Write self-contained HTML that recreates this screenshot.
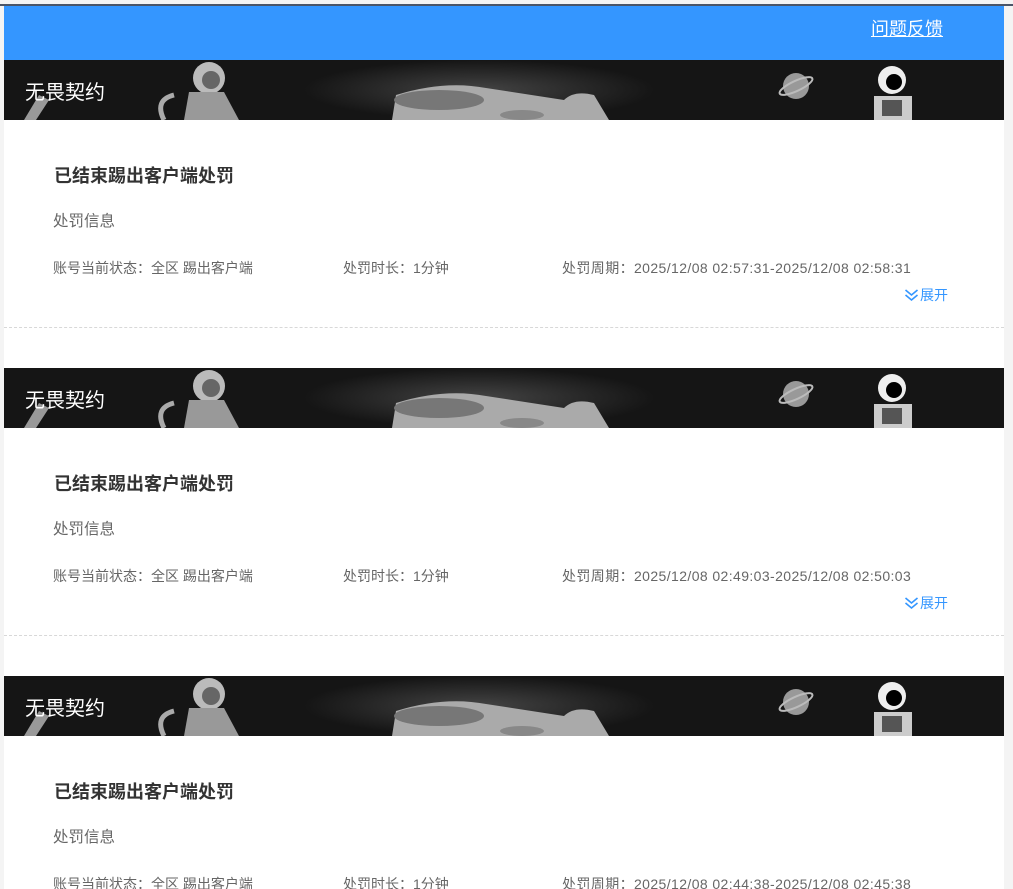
<!DOCTYPE html>
<html><head><meta charset="utf-8"><style>
*{margin:0;padding:0;box-sizing:border-box}
html,body{width:1013px;height:889px;overflow:hidden}
body{background:#f4f4f4;font-family:"Liberation Sans","Noto Sans CJK SC",sans-serif;position:relative}
.topline{position:absolute;left:0;top:4px;width:1013px;height:2px;background:#4a5568}
.wrap{position:absolute;left:4px;top:6px;width:1000px;height:883px;background:#fff;overflow:hidden}
.hdr{height:54px;background:#3496ff;position:relative}
.hdr a{position:absolute;left:867px;top:9px;color:#fff;font-size:18px;text-decoration:underline}
.card{height:308px;position:relative}
.ban{height:60px;background:#151515;position:relative;overflow:hidden}
.ban .t{position:absolute;left:21px;top:16px;color:#fff;font-size:20px}
.title{position:absolute;left:50px;top:102px;font-size:18px;font-weight:bold;color:#333}
.sub{position:absolute;left:49px;top:149px;font-size:15.5px;color:#666}
.row{position:absolute;top:198px;font-size:14px;color:#666;white-space:nowrap}
.d{letter-spacing:0.4px}
.exp{position:absolute;left:899px;top:225px;font-size:14px;color:#3496ff}
.dash{position:absolute;left:0;right:0;top:267px;border-top:1px dashed #d8d8d8}
</style></head><body>
<div class="topline"></div>
<div class="wrap">
<div class="hdr"><a>问题反馈</a></div>

<div class="card">
<div class="ban"><svg width="1000" height="60" style="position:absolute;left:0;top:0">
<defs><radialGradient id="g" cx="0.5" cy="0.5" r="0.5"><stop offset="0" stop-color="#444"/><stop offset="1" stop-color="#151515"/></radialGradient></defs>
<rect x="300" y="0" width="350" height="60" fill="url(#g)"/>
<path d="M388 60 L392 35 Q440 20 482 28 L560 40 Q570 30 590 35 L605 60Z" fill="#aaa"/>
<ellipse cx="435" cy="40" rx="45" ry="10" fill="#777"/>
<ellipse cx="518" cy="55" rx="22" ry="5" fill="#888"/>
<circle cx="205" cy="18" r="16" fill="#bbb"/><circle cx="207" cy="20" r="9" fill="#666"/>
<path d="M185 32 L220 32 L235 60 L180 60Z" fill="#999"/><path d="M160 60 Q150 40 170 35" stroke="#aaa" stroke-width="5" fill="none"/>
<path d="M20 60 L35 35 L45 40 L32 60Z" fill="#999"/>
<circle cx="792" cy="26" r="13" fill="#999"/><ellipse cx="792" cy="26" rx="18" ry="5" fill="none" stroke="#bbb" stroke-width="2" transform="rotate(-25 792 26)"/>
<circle cx="888" cy="20" r="14" fill="#eee"/><circle cx="890" cy="22" r="8" fill="#000"/>
<rect x="870" y="36" width="38" height="24" fill="#ccc"/><rect x="878" y="40" width="20" height="16" fill="#555"/>
</svg><span class="t">无畏契约</span></div>
<div class="title">已结束踢出客户端处罚</div>
<div class="sub">处罚信息</div>
<div class="row" style="left:49px">账号当前状态：全区 踢出客户端</div>
<div class="row" style="left:339px">处罚时长：1分钟</div>
<div class="row d" style="left:558px">处罚周期：2025/12/08 02:57:31-2025/12/08 02:58:31</div>
<div class="exp"><svg width="17" height="14" viewBox="0 0 16 14" style="vertical-align:-2px"><path d="M2 2 L8 7 L14 2 M2 7 L8 12 L14 7" stroke="#3496ff" stroke-width="1.6" fill="none"/></svg>展开</div>
<div class="dash"></div>
</div>

<div class="card">
<div class="ban"><svg width="1000" height="60" style="position:absolute;left:0;top:0">
<rect x="300" y="0" width="350" height="60" fill="url(#g)"/>
<path d="M388 60 L392 35 Q440 20 482 28 L560 40 Q570 30 590 35 L605 60Z" fill="#aaa"/>
<ellipse cx="435" cy="40" rx="45" ry="10" fill="#777"/>
<ellipse cx="518" cy="55" rx="22" ry="5" fill="#888"/>
<circle cx="205" cy="18" r="16" fill="#bbb"/><circle cx="207" cy="20" r="9" fill="#666"/>
<path d="M185 32 L220 32 L235 60 L180 60Z" fill="#999"/><path d="M160 60 Q150 40 170 35" stroke="#aaa" stroke-width="5" fill="none"/>
<path d="M20 60 L35 35 L45 40 L32 60Z" fill="#999"/>
<circle cx="792" cy="26" r="13" fill="#999"/><ellipse cx="792" cy="26" rx="18" ry="5" fill="none" stroke="#bbb" stroke-width="2" transform="rotate(-25 792 26)"/>
<circle cx="888" cy="20" r="14" fill="#eee"/><circle cx="890" cy="22" r="8" fill="#000"/>
<rect x="870" y="36" width="38" height="24" fill="#ccc"/><rect x="878" y="40" width="20" height="16" fill="#555"/>
</svg><span class="t">无畏契约</span></div>
<div class="title">已结束踢出客户端处罚</div>
<div class="sub">处罚信息</div>
<div class="row" style="left:49px">账号当前状态：全区 踢出客户端</div>
<div class="row" style="left:339px">处罚时长：1分钟</div>
<div class="row d" style="left:558px">处罚周期：2025/12/08 02:49:03-2025/12/08 02:50:03</div>
<div class="exp"><svg width="17" height="14" viewBox="0 0 16 14" style="vertical-align:-2px"><path d="M2 2 L8 7 L14 2 M2 7 L8 12 L14 7" stroke="#3496ff" stroke-width="1.6" fill="none"/></svg>展开</div>
<div class="dash"></div>
</div>

<div class="card">
<div class="ban"><svg width="1000" height="60" style="position:absolute;left:0;top:0">
<rect x="300" y="0" width="350" height="60" fill="url(#g)"/>
<path d="M388 60 L392 35 Q440 20 482 28 L560 40 Q570 30 590 35 L605 60Z" fill="#aaa"/>
<ellipse cx="435" cy="40" rx="45" ry="10" fill="#777"/>
<ellipse cx="518" cy="55" rx="22" ry="5" fill="#888"/>
<circle cx="205" cy="18" r="16" fill="#bbb"/><circle cx="207" cy="20" r="9" fill="#666"/>
<path d="M185 32 L220 32 L235 60 L180 60Z" fill="#999"/><path d="M160 60 Q150 40 170 35" stroke="#aaa" stroke-width="5" fill="none"/>
<path d="M20 60 L35 35 L45 40 L32 60Z" fill="#999"/>
<circle cx="792" cy="26" r="13" fill="#999"/><ellipse cx="792" cy="26" rx="18" ry="5" fill="none" stroke="#bbb" stroke-width="2" transform="rotate(-25 792 26)"/>
<circle cx="888" cy="20" r="14" fill="#eee"/><circle cx="890" cy="22" r="8" fill="#000"/>
<rect x="870" y="36" width="38" height="24" fill="#ccc"/><rect x="878" y="40" width="20" height="16" fill="#555"/>
</svg><span class="t">无畏契约</span></div>
<div class="title">已结束踢出客户端处罚</div>
<div class="sub">处罚信息</div>
<div class="row" style="left:49px">账号当前状态：全区 踢出客户端</div>
<div class="row" style="left:339px">处罚时长：1分钟</div>
<div class="row d" style="left:558px">处罚周期：2025/12/08 02:44:38-2025/12/08 02:45:38</div>
</div>
</div>
</body></html>
